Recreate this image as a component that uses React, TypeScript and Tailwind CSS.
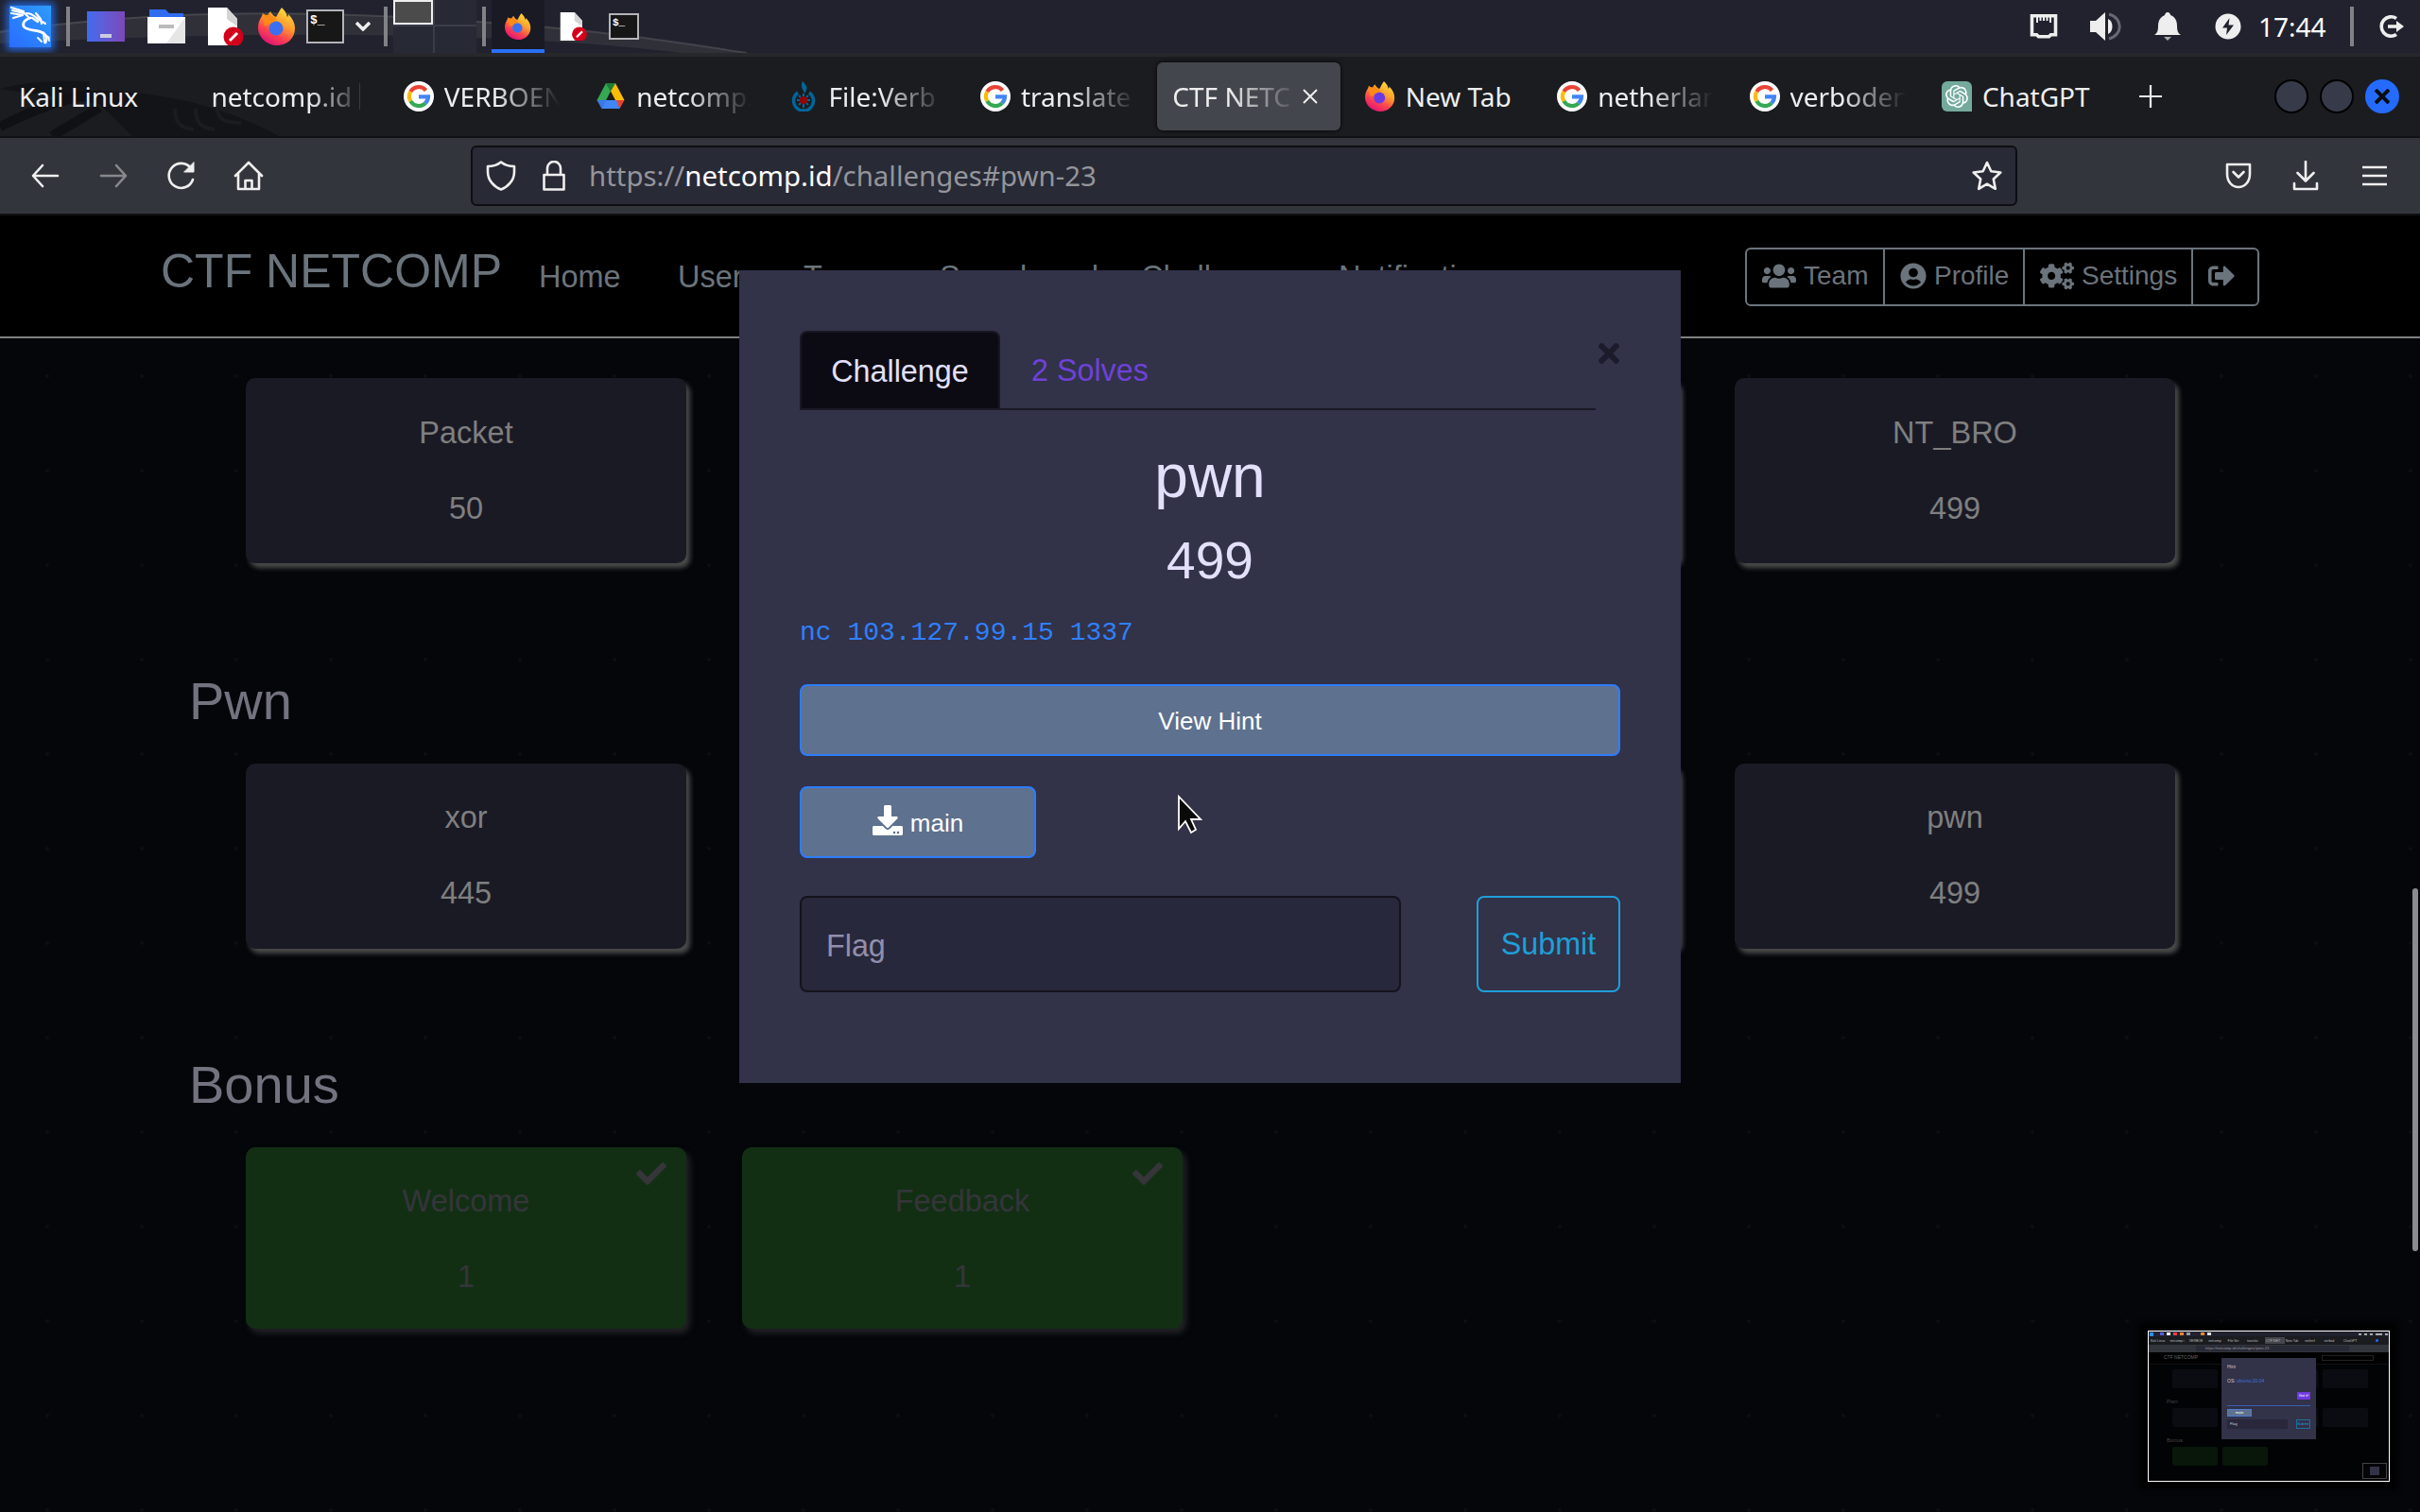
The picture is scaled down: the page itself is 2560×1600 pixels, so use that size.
import React from "react";
import { FaUsers, FaUserCircle, FaCogs, FaSignOutAlt, FaDownload, FaCheck, FaTimes } from "react-icons/fa";
import { SiOpenai } from "react-icons/si";

const UI = "font-['Noto_Sans'] text-[28px]";

function Dragon({ className = "" }: { className?: string }) {
  return (
    <svg viewBox="0 0 44 44" className={className} fill="none" stroke="#fff" strokeLinecap="round">
      <path d="M2 2l13 4M3 5l12 3M2 8l12 2M4 13l10-3" strokeWidth="2.2" />
      <path d="M12 6c4 1 6 4 8 6M18 8c6 0 8 3 12 6l8 5M28 8l5 6 1 5M24 13l6 4" strokeWidth="2.2" />
      <path d="M22 13c-7 2-9 7-6 10 5 4 14 2 20 6 4 3 4 6 2 10" strokeWidth="2.8" />
      <path d="M34 28l8 6M36 30l1 9M30 34l4 4M41 33l1 4" strokeWidth="1.800" />
    </svg>
  );
}

function Firefox({ className = "", purple = false }: { className?: string; purple?: boolean }) {
  return (
    <svg viewBox="0 0 40 40" className={className}>
      <defs>
        <linearGradient id="fxBody" x1="0.8" y1="0.05" x2="0.3" y2="1">
          <stop offset="0" stopColor="#ffde3c" />
          <stop offset="0.4" stopColor="#ff9a2e" />
          <stop offset="0.7" stopColor="#ff4050" />
          <stop offset="1" stopColor="#d8127a" />
        </linearGradient>
      </defs>
      <path d="M25 0c4 4 5 6 6 10 1-1 1-2 1-3 5 5 7 10 7 15 0 11-9 18-19 18S0 32 0 21c0-5 2-9 4-12l1-3 3 3 3-1 2-4c2 4 4 5 6 6 2-3 3-6 6-10z" fill="url(#fxBody)" />
      <circle cx="19" cy="22" r="7.500" fill={purple ? "#6a3be4" : "#3b6ff0"} />
      <path d="M5 7l5 1 2-3c2 4 4 5 7 6l-2 4-5 2c-1 4-4 0-5 3z" fill="#ff8a16" />
    </svg>
  );
}

function Doc({ className = "" }: { className?: string }) {
  return (
    <svg viewBox="0 0 40 40" className={className}>
      <path d="M1 0h20l11 12v28H1z" fill="#fff" />
      <path d="M21 0l11 12v8L21 12z" fill="#d4d4d4" />
      <circle cx="28" cy="31" r="10.5" fill="#d3001b" />
      <path d="M24 35l8-8" stroke="#fff" strokeWidth="3" />
    </svg>
  );
}

function Terminal({ className = "" }: { className?: string }) {
  return (
    <div className={`border-2 border-[#b4b4b8] bg-[#171717] text-white font-bold font-['Liberation_Mono'] ${className}`}>$_</div>
  );
}

function Google() {
  return (
    <svg viewBox="0 0 32 32" className="h-8 w-8 shrink-0">
      <circle cx="16" cy="16" r="16" fill="#fff" />
      <g fill="none" strokeWidth="4.2">
        <path d="M23.6 9.6A10 10 0 0 0 7.3 11" stroke="#ea4335" />
        <path d="M7.3 11a10 10 0 0 0 0 10" stroke="#fbbc05" />
        <path d="M7.3 21a10 10 0 0 0 15.6 2.2" stroke="#34a853" />
        <path d="M16 16.4h10a10 10 0 0 1-3.1 6.8" stroke="#4285f4" />
      </g>
    </svg>
  );
}

function Drive() {
  return (
    <svg viewBox="0 0 32 32" className="h-8 w-8 shrink-0">
      <path d="M11 2h10l-5 8.500z" fill="#188038" />
      <path d="M11 2l5 8.500L7 28 1.500 20z" fill="#34a853" />
      <path d="M21 2l9.500 18H21L16 10.500z" fill="#fbbc04" />
      <path d="M1.500 20h10l-5 9z" fill="#3a78e8" />
      <path d="M30.500 20l-5 9-5-9z" fill="#ea4335" />
      <path d="M11 20h11l3.500 9h-19z" fill="#4285f4" />
      <path d="M16 12.500l4 7.500h-8z" fill="#1b1c20" />
    </svg>
  );
}

function Commons() {
  return (
    <svg viewBox="0 0 32 32" className="h-8 w-8 shrink-0" fill="none">
      <path d="M15 0c5 5 6 8 2 13-1-4-5-7-2-13z" fill="#069" />
      <path d="M10 12a10.500 10.500 0 1 0 12 0" stroke="#069" strokeWidth="3.500" />
      <path d="M16 13v3M9 20h3M20 20h3M16 24v4M11 15l2 2M21 15l-2 2M11 25l2-2M21 25l-2-2" stroke="#069" strokeWidth="2" />
      <circle cx="16" cy="20" r="4" fill="#990000" />
    </svg>
  );
}

function ChatGPT() {
  return (
    <div className="flex h-8 w-8 shrink-0 items-center justify-center rounded-md rounded-br-none bg-[#74aa9c]">
      <SiOpenai className="h-6 w-6 text-white" />
    </div>
  );
}

type TabDef = { icon?: React.ReactNode; text: string; fade?: boolean; active?: boolean; bar?: boolean };

const tabs: TabDef[] = [
  { text: "Kali Linux" },
  { text: "netcomp.id", fade: true, bar: true },
  { icon: <Google />, text: "VERBOEN", fade: true },
  { icon: <Drive />, text: "netcomp.", fade: true },
  { icon: <Commons />, text: "File:Verb", fade: true },
  { icon: <Google />, text: "translate", fade: true },
  { text: "CTF NETC", fade: true, active: true },
  { icon: <Firefox className="h-8 w-8 shrink-0" purple />, text: "New Tab" },
  { icon: <Google />, text: "netherlan", fade: true },
  { icon: <Google />, text: "verboden", fade: true },
  { icon: <ChatGPT />, text: "ChatGPT" },
];

function Tab({ t }: { t: TabDef }) {
  return (
    <div className={`mr-[9.4px] flex h-[72px] w-[194px] shrink-0 items-center rounded-md pl-4 ${t.active ? "bg-[#44464d] shadow-[0_0_4px_#000]" : ""}`}>
      {t.icon}
      <div
        className={`overflow-hidden whitespace-nowrap ${t.icon ? "ml-[11px] w-[122px]" : t.active ? "w-[134px]" : "w-[150px]"} ${t.fade ? (t.bar ? "[mask-image:linear-gradient(to_right,#000_70%,#0003)]" : "[mask-image:linear-gradient(to_right,#000_45%,transparent)]") : ""}`}
      >
        {t.text}
      </div>
      {t.bar && <div className="ml-[7px] h-7 w-px bg-[#3a3b40]" />}
      {t.active && (
        <svg viewBox="0 0 16 16" className="ml-1 h-4 w-4" stroke="#eee" strokeWidth="2">
          <path d="M1 1l14 14M15 1L1 15" />
        </svg>
      )}
    </div>
  );
}

function Panel() {
  return (
    <div className="relative flex h-[56px] items-center overflow-hidden bg-[#21222e]">
      <svg className="absolute inset-0 h-full w-[900px]" viewBox="0 0 900 56">
        <path d="M0 32C150 12 300 8 520 24c130 10 190 20 270 32H720C560 36 300 30 0 46z" fill="#34353c" opacity="0.8" />
        <path d="M0 34C150 12 300 8 520 24c130 10 190 20 270 32" stroke="#55565a" strokeWidth="2" fill="none" opacity="0.6" />
      </svg>
      <div className="relative flex h-full w-full items-center">
        <div className="ml-[10px] h-11 w-11 bg-linear-to-tr from-[#2b6bff] to-[#2f9bff] shadow-[0_0_8px_3px_#2468e0]">
          <Dragon className="h-11 w-11" />
        </div>
        <div className="ml-4 h-[42px] w-1 bg-[#818286]" />
        <div className="ml-[18px] flex h-8 w-10 items-end justify-center bg-linear-to-r from-[#3d6bf0] to-[#7a48b8] pb-1">
          <div className="h-1 w-3 bg-[#ccd]" />
        </div>
        <svg viewBox="0 0 40 36" className="ml-6 h-9 w-10">
          <path d="M2 0h17l4 4h15v6H2z" fill="#2f6cf0" />
          <path d="M0 8h40v28H0z" fill="#fff" />
          <path d="M40 8v28H20z" fill="#e6e6e6" />
          <path d="M12 18h16" stroke="#bbb" strokeWidth="4" />
        </svg>
        <Doc className="ml-[23px] h-10 w-10" />
        <Firefox className="ml-[14px] h-10 w-10" />
        <Terminal className="ml-[11px] h-9 w-10 pl-[2px] text-[13px] leading-[20px]" />
        <svg viewBox="0 0 16 10" className="ml-3 h-[10px] w-4" fill="none" stroke="#eee" strokeWidth="3.500">
          <path d="M1 1l7 7 7-7" />
        </svg>
        <div className="ml-[14px] h-[42px] w-1 bg-[#818286]" />
        <div className="ml-[6px] grid h-[56px] w-[88px] grid-cols-[42px_44px] grid-rows-[26px_28px] gap-[2px] bg-[#3a3c4a]">
          <div className="border-2 border-[#eee] bg-[#4b4b4b]" />
          <div className="bg-[#272935]" />
          <div className="bg-[#272935]" />
          <div className="bg-[#272935]" />
        </div>
        <div className="ml-[6px] h-[42px] w-1 bg-[#818286]" />
        <div className="ml-[6px] flex h-full w-14 items-center justify-center border-b-4 border-[#2b70f8] bg-[#191a24] pt-1">
          <Firefox className="h-7 w-7" />
        </div>
        <Doc className="ml-4 h-[30px] w-[30px]" />
        <Terminal className="ml-[22px] h-7 w-8 pl-[2px] text-[11px] leading-[16px]" />
        <div className="flex-1" />
        <svg viewBox="0 0 30 26" className="mr-[2px] h-[26px] w-[30px]" fill="none" stroke="#eee" strokeWidth="3.600">
          <path d="M2.500 1.800h25v20h-5l-2 2h-11l-2-2h-5z" />
          <path d="M8 2v7M11.500 2v5M15 2v5M18.500 2v5M22 2v7" strokeWidth="2" />
        </svg>
        <svg viewBox="0 0 34 32" className="ml-8 h-8 w-[34px]" fill="#eee">
          <path d="M0 10h6l10-9v30l-10-9H0z" />
          <path d="M19 8c6 2 6 14 0 16z" />
          <path d="M20 3c15 4 15 22 0 26" fill="none" stroke="#666872" strokeWidth="3" />
        </svg>
        <svg viewBox="0 0 28 30" className="ml-[34px] h-[30px] w-7" fill="#eee">
          <path d="M14 0c2 0 3 2 3 3 5 2 7 6 7 11 0 6 1 8 4 10H0c3-2 4-4 4-10 0-5 2-9 7-11 0-1 1-3 3-3z" />
          <path d="M10 26h8l-4 4z" fill="#aaa" />
        </svg>
        <svg viewBox="0 0 28 28" className="ml-[36px] h-7 w-7">
          <circle cx="14" cy="14" r="13.500" fill="#eee" />
          <path d="M15.500 5L8 15.500h5L12 23l8-10.500h-5.500z" fill="#21222e" />
        </svg>
        <div className={`ml-[18px] w-[75px] whitespace-nowrap text-white ${UI}`}>17:44</div>
        <div className="ml-[22px] h-[42px] w-1 bg-[#818286]" />
        <svg viewBox="0 0 28 26" className="ml-[25px] mr-[17px] h-[26px] w-7" fill="none" stroke="#eee" strokeWidth="3.600">
          <path d="M20 4.500a10.200 10.200 0 1 0 0 17" />
          <path d="M11 13h10" />
          <path d="M20 7l8 6-8 6z" fill="#eee" stroke="none" />
        </svg>
      </div>
    </div>
  );
}

function TabStrip() {
  return (
    <div className={`relative flex h-[90px] items-center overflow-hidden border-t-4 border-b-2 border-t-[#27282b] border-b-[#0f1013] bg-[#1b1c20] pl-1 text-[#eeeeef] ${UI}`}>
      <svg className="absolute left-0 top-0 h-[84px] w-[300px]" viewBox="0 0 300 84" fill="none">
        <path d="M0 34c40-10 70-8 95-8v10c60 0 130 10 200 48H140L105 50z" fill="#131417" />
        <path d="M0 74c40-20 70-30 95-34M55 84l50-30" stroke="#101114" strokeWidth="10" />
        <path d="M185 55c0 15 5 20 20 22M207 55c0 15 5 20 20 22M230 55c0 12 10 15 25 15" stroke="#1b1c20" strokeWidth="4" />
      </svg>
      <div className="relative flex w-full items-center">
        {tabs.map((t, i) => (
          <Tab key={i} t={t} />
        ))}
        <svg viewBox="0 0 24 24" className="ml-[22px] h-6 w-6 shrink-0" stroke="#eee" strokeWidth="2.200">
          <path d="M12 0v24M0 12h24" />
        </svg>
        <div className="ml-auto mr-[22px] flex gap-[12px]">
          <div className="h-9 w-9 rounded-full border-2 border-black bg-[#373a48]" />
          <div className="h-9 w-9 rounded-full border-2 border-black bg-[#373a48]" />
          <div className="flex h-9 w-9 items-center justify-center rounded-full bg-[#246bfd]">
            <svg viewBox="0 0 16 16" className="h-4 w-4" stroke="#0c0d12" strokeWidth="4">
              <path d="M1 1l14 14M15 1L1 15" />
            </svg>
          </div>
        </div>
      </div>
    </div>
  );
}

function Toolbar() {
  const s = { fill: "none", stroke: "#efefef", strokeWidth: 2.6, strokeLinejoin: "round" as const, strokeLinecap: "round" as const };
  return (
    <div className="flex h-[82px] items-center border-b-2 border-[#101115] bg-[#33353c] pl-8">
      <svg viewBox="0 0 32 32" className="h-8 w-8" {...s}><path d="M29 16H3M13 5L3 16l10 11" /></svg>
      <svg viewBox="0 0 32 32" className="ml-10 h-8 w-8 opacity-45" {...s}><path d="M3 16h26M19 5l10 11-10 11" /></svg>
      <svg viewBox="0 0 32 32" className="ml-10 h-8 w-8" {...s}>
        <path d="M28 20a13 13 0 1 1-2-12" />
        <path d="M29 2v10H19z" fill="#efefef" strokeWidth="1" />
      </svg>
      <svg viewBox="0 0 32 32" className="ml-[39px] h-8 w-8" {...s}>
        <path d="M2 16L16 2l14 14M5 14v16h22V14M12.500 30v-9h7v9" />
      </svg>
      <div className="ml-[219px] flex h-16 w-[1636px] items-center rounded-md border-2 border-[#0d0e12] bg-[#282a36] pl-[14px]">
        <svg viewBox="0 0 32 32" className="h-8 w-8" {...s}>
          <path d="M16 1.500C13 4 7 6 2 6v6c0 9 7 16 14 18.500C23 28 30 21 30 12V6c-5 0-11-2-14-4.500z" />
        </svg>
        <svg viewBox="0 0 24 32" className="ml-7 h-8 w-6" {...s}>
          <path d="M5 15V8a7 7 0 0 1 14 0v7M1.500 15h21v15.500h-21z" />
        </svg>
        <div className="ml-[25px] whitespace-nowrap font-['Noto_Sans'] text-[29.400px] text-[#94959b]">
          https://<span className="text-white">netcomp.id</span>/challenges#pwn-23
        </div>
        <svg viewBox="0 0 32 32" className="ml-auto mr-[14px] h-8 w-8" {...s}>
          <path d="M16 2l4.300 9.300 10 1.200-7.500 7 2 10.300L16 24.700l-8.800 5.100 2-10.300-7.500-7 10-1.200z" />
        </svg>
      </div>
      <svg viewBox="0 0 28 28" className="ml-[220px] h-7 w-7" {...s}>
        <path d="M2 2h24v10c0 8-5 14-12 14S2 20 2 12zM8.500 10l5.500 5.500 5.500-5.500" />
      </svg>
      <svg viewBox="0 0 28 32" className="ml-[43px] h-8 w-7" {...s}>
        <path d="M14 1v20M5.500 13l8.500 8.500 8.500-8.500M2 24v6h24v-6" />
      </svg>
      <svg viewBox="0 0 26 22" className="ml-[46px] h-[22px] w-[26px]" stroke="#efefef" strokeWidth="2.400">
        <path d="M0 2h26M0 11h26M0 20h26" />
      </svg>
    </div>
  );
}

function Navbar() {
  return (
    <div className="flex h-[130px] border-b-2 border-[#808080] bg-black text-[#6b747c]">
      <div className="ml-[170px] w-[400px] pt-[29px] text-[50px] leading-[60px] whitespace-nowrap">CTF NETCOMP</div>
      <div className="grid w-[1276px] grid-cols-[147px_133px_144px_213px_209px_1fr] whitespace-nowrap pt-[45px] text-[32.500px] leading-[40px]">
        <span>Home</span>
        <span>Users</span>
        <span>Teams</span>
        <span>Scoreboard</span>
        <span>Challenges</span>
        <span>Notifications</span>
      </div>
      <div className="mt-[34px] flex h-[62px] w-[544px] divide-x-2 divide-[#6b747c] rounded-md border-2 border-[#6b747c] text-[28px] [&>div]:pb-[2px]">
        <div className="flex w-[146px] items-center gap-2 pl-4"><FaUsers className="h-9 w-9" />Team</div>
        <div className="flex w-[148px] items-center gap-2 pl-4"><FaUserCircle className="h-7 w-7" />Profile</div>
        <div className="flex w-[178px] items-center gap-2 pl-4"><FaCogs className="h-9 w-9" />Settings</div>
        <div className="flex flex-1 items-center pl-4"><FaSignOutAlt className="h-7 w-7" /></div>
      </div>
    </div>
  );
}

function Card({ name, value, solved, pad = "pt-[38px]" }: { name: string; value: string; solved?: boolean; pad?: string }) {
  return (
    <div
      className={`relative flex w-[466px] flex-col items-center rounded-[10px] text-[32.500px] leading-[40px] ${pad} ${
        solved
          ? "h-[192px] bg-[#122f14] text-[#35353a] shadow-[4px_5px_6px_#222226]"
          : "h-[196px] bg-[#1a1a25] text-[#7f7f80] shadow-[4px_5px_5px_#4a4a4a]"
      }`}
    >
      {solved && <FaCheck className="absolute right-[21px] top-[12px] h-8 w-8" />}
      <div>{name}</div>
      <div className="mt-10">{value}</div>
    </div>
  );
}

function Row({ cards, solved, pad, className }: { cards: (string[] | null)[]; solved?: boolean; pad?: string; className: string }) {
  return (
    <div className={`grid grid-cols-[466px_466px_466px_466px] gap-[59px] pl-[260px] ${className}`}>
      {cards.map((c, i) => (c ? <Card key={i} name={c[0]} value={c[1]} solved={solved} pad={pad} /> : <div key={i} />))}
    </div>
  );
}

function Heading({ children, className }: { children: string; className: string }) {
  return <h3 className={`ml-[200px] text-[56px] leading-[60px] text-[#74727f] ${className}`}>{children}</h3>;
}

function Modal() {
  return (
    <div className="absolute left-[782px] top-[286px] flex h-[860px] w-[996px] flex-col bg-[#323249] px-16 pt-16 text-[#e3e0fb]">
      <div className="flex">
        <div className="flex h-[84px] w-[842px] shrink-0 border-b-2 border-[#1a1926] text-[32.300px]">
          <div className="flex w-[212px] items-center justify-center rounded-t-lg border-2 border-b-0 border-[#181724] bg-[#0c0b14] pt-[2px]">Challenge</div>
          <div className="flex items-center pl-[33px] pt-[3px] text-[#6e42d8]">2 Solves</div>
        </div>
        <FaTimes className="-ml-[2px] mt-[8px] h-8 w-8 shrink-0 text-[#1c1b2c]" />
      </div>
      <div className="mt-[32px] text-center text-[64px] leading-[76px]">pwn</div>
      <div className="mt-[18px] text-center text-[55px] leading-[66px]">499</div>
      <div className="mt-[28px] font-['Liberation_Mono'] text-[28px] leading-[32px] text-[#2f80fa]">nc 103.127.99.15 1337</div>
      <button className="mt-[38px] h-[76px] shrink-0 rounded-lg border-2 border-[#2d7dfe] bg-[#5e718e] pt-[3px] text-[26px] text-white">View Hint</button>
      <button className="mt-8 flex h-[76px] w-[250px] shrink-0 items-center justify-center gap-2 rounded-lg border-2 border-[#2d7dfe] bg-[#5e718e] pt-[3px] text-[26px] text-white">
        <FaDownload className="-mt-2 h-8 w-8" />
        main
      </button>
      <div className="mt-10 flex justify-between text-[32.300px]">
        <div className="flex h-[102px] w-[636px] items-center rounded-lg border-2 border-[#14131d] bg-[#28283c] pl-[26px] pt-[4px] text-[#928fac]">Flag</div>
        <button className="h-[102px] w-[152px] rounded-lg border-2 border-[#1f9fd8] text-[#1f9fd8]">Submit</button>
      </div>
    </div>
  );
}

function MiniCards({ green }: { green?: boolean }) {
  return (
    <div className="ml-[25px] flex gap-[5px]">
      {[0, 1, 2, 3].map((i) => (
        <div key={i} className={`h-5 w-[48px] rounded-xs ${green ? (i < 2 ? "bg-[#08170a]" : "") : "bg-[#0b0b12]"}`} />
      ))}
    </div>
  );
}

const miniTabs = ["Kali Linux", "netcomp.i", "VERBOE", "netcomp", "File:Ver", "translat", "CTF NET", "New Tab", "netherl", "verbod", "ChatGPT"];

function Thumbnail() {
  return (
    <div className="absolute left-[2272px] top-[1408px] h-[160px] w-[256px] overflow-hidden border border-white bg-[#020305] shadow-[0_0_5px_8px_#000]">
      <div className="flex h-[5px] items-center gap-[3px] bg-[#21222e] px-px">
        <div className="h-1 w-1 bg-[#2b90ff]" />
        <div className="ml-1 h-[3px] w-1 bg-[#5560e0]" />
        <div className="h-[3px] w-1 bg-white" />
        <div className="h-[3px] w-1 bg-[#e44]" />
        <div className="h-[3px] w-1 bg-[#f83]" />
        <div className="h-[3px] w-1 bg-[#999]" />
        <div className="ml-2 h-[3px] w-1 bg-[#f83]" />
        <div className="h-[3px] w-1 bg-[#ddd]" />
        <div className="flex-1" />
        {[0, 1, 2, 3, 4].map((i) => (
          <div key={i} className={`h-[2px] bg-[#aaa] ${i === 3 ? "w-[7px]" : "w-[3px]"}`} />
        ))}
      </div>
      <div className="flex h-[9px] items-center bg-[#1b1c20] pl-px text-[3.500px] leading-[8px] text-[#bbb]">
        {miniTabs.map((t, i) => (
          <div key={i} className={`h-[7px] w-[20.400px] shrink-0 pl-px ${i === 6 ? "bg-[#44464d]" : ""}`}>{t}</div>
        ))}
        <div className="ml-[15px] h-[3px] w-[3px] shrink-0 rounded-full bg-[#246bfd]" />
      </div>
      <div className="flex h-2 items-center bg-[#33353c] pl-[50px]">
        <div className="h-[6px] w-[162px] bg-[#282a36] pl-[10px] text-[4px] leading-[6px] text-[#999]">https://netcomp.id/challenges#pwn-23</div>
      </div>
      <div className="flex h-[13px] items-center justify-between border-b border-[#111] bg-black pl-4 pr-4">
        <div className="text-[5px] text-[#666]">CTF NETCOMP</div>
        <div className="h-[6px] w-[55px] border border-[#222]" />
      </div>
      <div className="mt-[5px]"><MiniCards /></div>
      <div className="mt-[10px] ml-[19px] h-[11px] text-[6px] leading-[8px] text-[#444]">Pwn</div>
      <MiniCards />
      <div className="mt-[10px] ml-[19px] h-[11px] text-[6px] leading-[8px] text-[#444]">Bonus</div>
      <MiniCards green />
      <div className="absolute left-[77px] top-[28px] flex h-[86px] w-[100px] flex-col bg-[#323249] px-[6px] pt-[6px] text-[5px] leading-[6px] text-[#ccc]">
        <div>Hint</div>
        <div className="mt-[9px]">OS: <span className="text-[#3f74d8]">ubuntu:20.04</span></div>
        <div className="mt-[9px] ml-auto h-2 w-[14px] bg-[#7038e0] text-center text-[4px] leading-[8px] text-white">Got it!</div>
        <div className="mt-[6px] h-px w-full shrink-0 bg-[#3c5fae]" />
        <div className="mt-[3px] h-2 w-[26px] border border-[#4c7dd0] bg-[#5e718e] text-center text-[4px] leading-[6px] text-white">main</div>
        <div className="mt-[3px] flex justify-between text-[4px] leading-[8px]">
          <div className="h-[10px] w-[64px] bg-[#28273b] pl-[3px] pt-px">Flag</div>
          <div className="h-[10px] w-[15px] border border-[#1f6f9c] text-center text-[#1f9fd8]">Submit</div>
        </div>
      </div>
      <div className="absolute bottom-[2px] right-[2px] flex h-[17px] w-[26px] items-center justify-center border border-[#444] bg-[#050507]">
        <div className="h-[9px] w-[10px] bg-[#323249]" />
      </div>
    </div>
  );
}

export default function App() {
  return (
    <div className="relative h-[1600px] w-[2560px] overflow-hidden bg-[#04060a] font-['Liberation_Sans',Arial,sans-serif]">
      <Panel />
      <TabStrip />
      <Toolbar />
      <Navbar />
      <div className="h-[1242px] bg-[radial-gradient(circle,#0c0e12_1.5px,transparent_2px)] bg-[length:100px_100px] bg-[position:0px_-10px]">
        <Row className="pt-[42px]" cards={[["Packet", "50"], null, ["", ""], ["NT_BRO", "499"]]} />
        <Heading className="mt-[116px]">Pwn</Heading>
        <Row className="mt-[36px]" pad="pt-[37px]" cards={[["xor", "445"], null, ["", ""], ["pwn", "499"]]} />
        <Heading className="mt-[114px]">Bonus</Heading>
        <Row className="mt-[36px]" pad="pt-[37px]" solved cards={[["Welcome", "1"], ["Feedback", "1"]]} />
      </div>
      <Modal />
      <svg viewBox="0 0 26 42" className="absolute left-[1246px] top-[841px] h-[42px] w-[26px]">
        <path d="M1 2v34l7-8 6 12 5-3-5-11h10z" fill="#0a0a0a" stroke="#fff" strokeWidth="1.800" />
      </svg>
      <div className="absolute left-[2552px] top-[940px] h-[384px] w-[6px] rounded-full bg-[#8c8c8f]" />
      <Thumbnail />
    </div>
  );
}
